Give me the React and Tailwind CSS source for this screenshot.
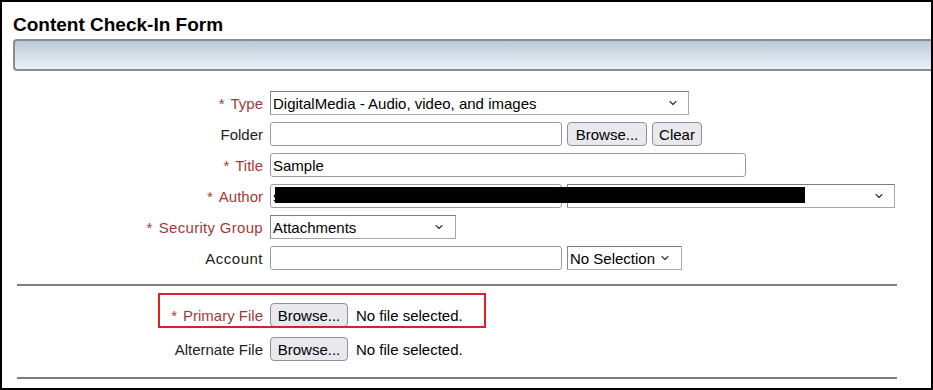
import React from "react";
import { ChevronDown } from "lucide-react";

const font = { fontFamily: '"Liberation Sans", Arial, sans-serif' };

function Label({ children, req, extra = "" }) {
  return (
    <div className={`w-[261px] shrink-0 text-right ${req ? "text-[#a33a3a]" : "text-[#222]"} ${extra}`}>
      {req ? <span className="pr-[6px]">*</span> : null}
      {children}
    </div>
  );
}

function TextBox({ w, children }) {
  return (
    <div className={`${w} h-[24px] rounded-[3px] border border-[#9a9aa6] bg-white flex items-center px-[2px] text-black overflow-hidden whitespace-nowrap`}>
      {children}
    </div>
  );
}

function Select({ w, children, chev = "pr-[10px]" }) {
  return (
    <div className={`${w} h-[24px] border border-[#a8a8a8] border-t-[#7c7c7c] border-l-[#8a8a8a] bg-white flex items-center justify-between pl-[2px] ${chev} text-black whitespace-nowrap`}>
      <span>{children}</span>
      <ChevronDown size={12} strokeWidth={2.2} className="text-[#333]" />
    </div>
  );
}

function Btn({ w, children }) {
  return (
    <div className={`${w} h-[24px] rounded-[4px] border border-[#8f8f9d] bg-[#e9e9ed] flex items-center justify-center text-black`}>
      {children}
    </div>
  );
}

export default function App() {
  return (
    <div className="w-[933px] h-[390px] bg-white border-2 border-black overflow-hidden text-[15px] leading-none" style={font}>
      <div className="pl-[11px] pt-[12px] text-[19px] font-bold text-black leading-[22px]">
        Content Check-In Form
      </div>
      <div className="ml-[11px] mt-[3px] h-[32px] rounded-l-[4px] border-2 border-r-0 border-[#8c8c8c] bg-gradient-to-b from-[#bccbd9] to-[#ebf0f7]" />

      <div className="mt-[20px] flex flex-col gap-[7px]">
        <div className="flex items-center h-[24px]">
          <Label req>Type</Label>
          <div className="ml-[7px]">
            <Select w="w-[419px]" chev="pr-[9px]">DigitalMedia - Audio, video, and images</Select>
          </div>
        </div>
        <div className="flex items-center h-[24px]">
          <Label>Folder</Label>
          <div className="ml-[7px] flex gap-[5px]">
            <TextBox w="w-[292px]" />
            <Btn w="w-[80px]">Browse...</Btn>
            <Btn w="w-[50px]">Clear</Btn>
          </div>
        </div>
        <div className="flex items-center h-[24px]">
          <Label req>Title</Label>
          <div className="ml-[7px]">
            <TextBox w="w-[476px]">Sample</TextBox>
          </div>
        </div>
        <div className="flex items-center h-[24px] relative">
          <Label req>Author</Label>
          <div className="ml-[7px] flex gap-[5px]">
            <TextBox w="w-[292px]">s</TextBox>
            <Select w="w-[328px]" chev="pr-[9px]">{" "}</Select>
          </div>
          <div className="absolute left-[273px] top-[3px] w-[530px] h-[16px] bg-black" />
        </div>
        <div className="flex items-center h-[24px]">
          <Label req extra="tracking-[0.3px]">Security Group</Label>
          <div className="ml-[7px]">
            <Select w="w-[186px]" chev="pr-[10px]">Attachments</Select>
          </div>
        </div>
        <div className="flex items-center h-[24px]">
          <Label extra="tracking-[0.5px]">Account</Label>
          <div className="ml-[7px] flex gap-[5px]">
            <TextBox w="w-[292px]" />
            <Select w="w-[115px]" chev="pr-[10px]">No Selection</Select>
          </div>
        </div>
      </div>

      <div className="ml-[15px] w-[880px] h-[2px] bg-[#7d7d7d] mt-[14px]" />

      <div className="mt-[17px] flex flex-col gap-[10px]">
        <div className="flex items-center h-[24px] relative">
          <Label req>Primary File</Label>
          <div className="ml-[7px] flex items-center gap-[8px]">
            <Btn w="w-[78px]">Browse...</Btn>
            <span className="text-black">No file selected.</span>
          </div>
          <div className="absolute left-[156px] top-[-10px] w-[328px] h-[35px] border-2 border-[#e01e27]" />
        </div>
        <div className="flex items-center h-[24px]">
          <Label>Alternate File</Label>
          <div className="ml-[7px] flex items-center gap-[8px]">
            <Btn w="w-[78px]">Browse...</Btn>
            <span className="text-black">No file selected.</span>
          </div>
        </div>
      </div>

      <div className="ml-[15px] w-[880px] h-[2px] bg-[#7d7d7d] mt-[16px]" />
    </div>
  );
}
